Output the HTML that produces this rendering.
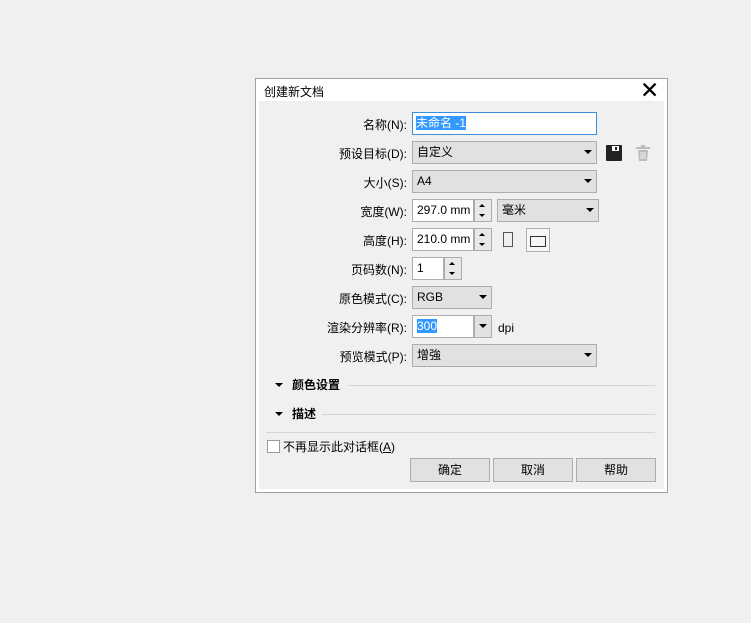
<!DOCTYPE html>
<html><head><meta charset="utf-8"><style>
body{margin:0;width:751px;height:623px;background:#f0f0f0;font-family:"Liberation Sans","Noto Sans CJK SC",sans-serif;font-size:12px;color:#000;position:relative;overflow:hidden}
.a{position:absolute}
.dlg{left:255px;top:78px;width:413px;height:415px;border:1px solid #a0a0a0;background:#fff;box-sizing:border-box}
.body{left:259px;top:101px;width:405px;height:388px;background:#f0f0f0}
.lbl{position:absolute;right:344px;text-align:right;white-space:nowrap;line-height:16px}
.box{position:absolute;height:23px;box-sizing:border-box;border:1px solid #adadad;background:#e1e1e1;line-height:21px;padding-left:4px}
.in{background:#fff;border-color:#7a7a7a}
.arr{position:absolute;right:4px;top:8px;width:0;height:0;border-left:4px solid transparent;border-right:4px solid transparent;border-top:4px solid #000}
.spin{position:absolute;width:18px;height:23px;box-sizing:border-box;border:1px solid #adadad;background:#e9e9e9}
.spin:before{content:"";position:absolute;left:4px;top:4px;border-left:3px solid transparent;border-right:3px solid transparent;border-bottom:3px solid #000}
.spin:after{content:"";position:absolute;left:4px;bottom:4px;border-left:3px solid transparent;border-right:3px solid transparent;border-top:3px solid #000}
.btn{position:absolute;top:458px;width:80px;height:24px;box-sizing:border-box;border:1px solid #adadad;background:#e1e1e1;text-align:center;line-height:22px}
.sel{background:#3399ff;color:#fff}
</style></head><body>
<div class="a dlg"></div>
<div class="a" style="left:264px;top:84px;line-height:16px">创建新文档</div>
<div class="a" style="left:640px;top:78px;font-size:23px;line-height:24px">✕</div>
<div class="a body"></div>

<div class="lbl" style="top:117px">名称(N):</div>
<div class="box in" style="left:412px;top:112px;width:185px;border:1px solid #3c8fd8;padding-left:3px"><span class="sel">未命名 -1</span></div>

<div class="lbl" style="top:146px">预设目标(D):</div>
<div class="box" style="left:412px;top:141px;width:185px">自定义<i class="arr"></i></div>
<svg class="a" style="left:606px;top:145px" width="16" height="16"><rect x="0" y="0" width="16" height="16" rx="1" fill="#222"/><rect x="6" y="1" width="7" height="5" fill="#fff"/><rect x="9" y="2" width="2" height="3" fill="#222"/><rect x="3" y="9" width="10" height="6" fill="#222"/></svg>
<svg class="a" style="left:636px;top:145px" width="14" height="16"><rect x="0" y="2" width="14" height="2" fill="#bbb"/><rect x="5" y="0" width="4" height="2" fill="#bbb"/><path d="M2 5h10l-1 11H3z" fill="#bbb"/><path d="M5 7v7M7 7v7M9 7v7" stroke="#f0f0f0"/></svg>

<div class="lbl" style="top:175px">大小(S):</div>
<div class="box" style="left:412px;top:170px;width:185px">A4<i class="arr"></i></div>

<div class="lbl" style="top:204px">宽度(W):</div>
<div class="box in" style="left:412px;top:199px;width:62px;border-color:#adadad">297.0 mm</div>
<div class="spin" style="left:474px;top:199px"></div>
<div class="box" style="left:497px;top:199px;width:102px">毫米<i class="arr"></i></div>

<div class="lbl" style="top:233px">高度(H):</div>
<div class="box in" style="left:412px;top:228px;width:62px;border-color:#adadad">210.0 mm</div>
<div class="spin" style="left:474px;top:228px"></div>
<div class="a" style="left:503px;top:232px;width:10px;height:15px;border:1px solid #555;box-sizing:border-box"></div>
<div class="a" style="left:526px;top:228px;width:24px;height:24px;border:1px solid #adadad;box-sizing:border-box;background:#f7f7f7"><div class="a" style="left:3px;top:7px;width:16px;height:11px;border:1px solid #333;box-sizing:border-box"></div></div>

<div class="lbl" style="top:262px">页码数(N):</div>
<div class="box in" style="left:412px;top:257px;width:32px;border-color:#adadad">1</div>
<div class="spin" style="left:444px;top:257px"></div>

<div class="lbl" style="top:291px">原色模式(C):</div>
<div class="box" style="left:412px;top:286px;width:80px">RGB<i class="arr"></i></div>

<div class="lbl" style="top:320px">渲染分辨率(R):</div>
<div class="box in" style="left:412px;top:315px;width:62px;border-color:#adadad"><span class="sel">300</span></div>
<div class="box" style="left:474px;top:315px;width:18px"><i class="arr"></i></div>
<div class="a" style="left:498px;top:320px;line-height:16px">dpi</div>

<div class="lbl" style="top:349px">预览模式(P):</div>
<div class="box" style="left:412px;top:344px;width:185px">增強<i class="arr"></i></div>

<div class="a" style="left:275px;top:383px;border-left:4px solid transparent;border-right:4px solid transparent;border-top:4px solid #000"></div>
<div class="a" style="left:292px;top:377px;font-weight:bold;line-height:16px">颜色设置</div>
<div class="a" style="left:348px;top:385px;width:307px;height:1px;background:#d5d5d5"></div>
<div class="a" style="left:275px;top:412px;border-left:4px solid transparent;border-right:4px solid transparent;border-top:4px solid #000"></div>
<div class="a" style="left:292px;top:406px;font-weight:bold;line-height:16px">描述</div>
<div class="a" style="left:322px;top:414px;width:333px;height:1px;background:#d5d5d5"></div>
<div class="a" style="left:266px;top:432px;width:389px;height:1px;background:#d5d5d5"></div>

<div class="a" style="left:267px;top:440px;width:13px;height:13px;border:1px solid #999;background:#fff;box-sizing:border-box"></div>
<div class="a" style="left:283px;top:439px;line-height:16px">不再显示此对话框(<u>A</u>)</div>

<div class="btn" style="left:410px">确定</div>
<div class="btn" style="left:493px">取消</div>
<div class="btn" style="left:576px">帮助</div>
</body></html>
